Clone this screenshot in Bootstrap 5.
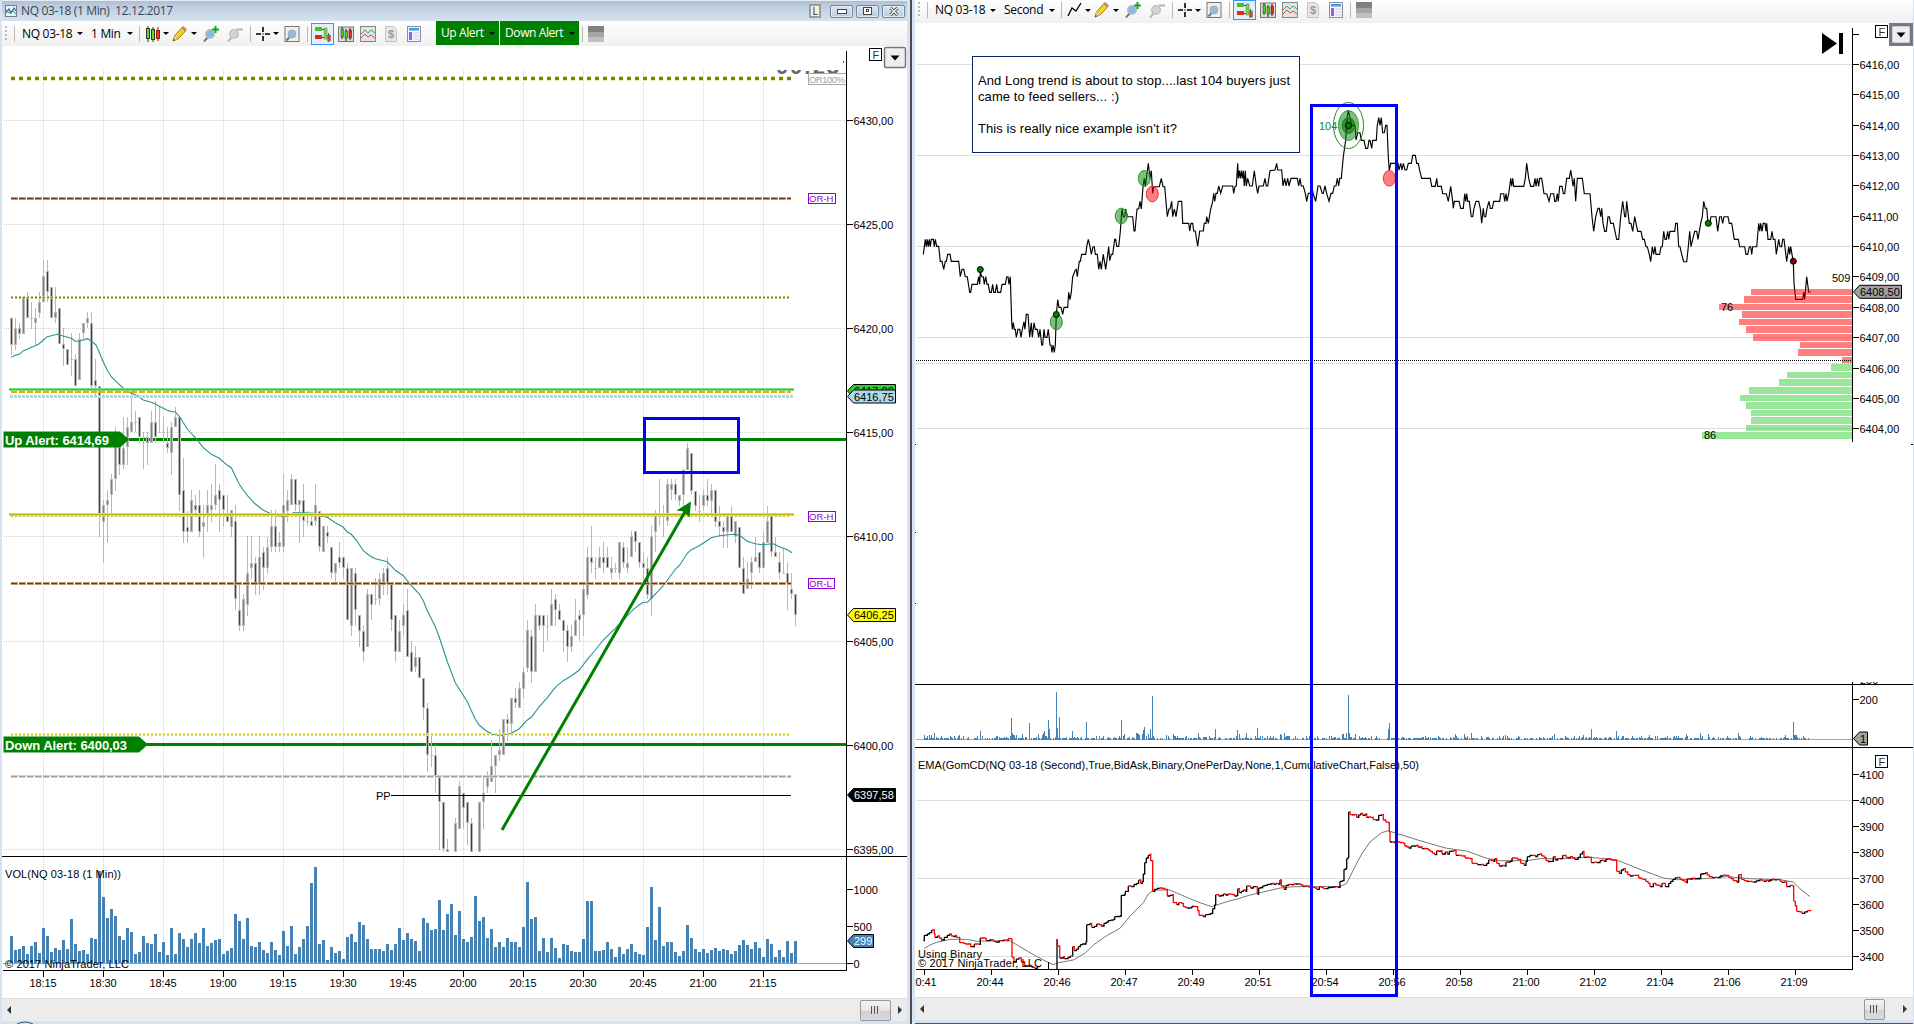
<!DOCTYPE html>
<html lang="en">
<head>
<meta charset="utf-8">
<title>NQ 03-18 charts</title>
<link href="https://cdn.jsdelivr.net/npm/bootstrap@5.3.0/dist/css/bootstrap.min.css" rel="stylesheet">
<script src="https://cdn.jsdelivr.net/npm/bootstrap@5.3.0/dist/js/bootstrap.bundle.min.js"></script>
<style>
body{width:1914px;height:1024px;overflow:hidden;background:#fff;font-family:"Open Sans","Noto Sans",sans-serif;font-size:12px;line-height:1;color:#000}
.desk{width:1914px;height:1024px}
.pane-l{width:910px;border-left:2px solid #d6e4f1;border-right:3px solid #d6e4f1;background:#fff}
.split{width:2px;background:#4b4b50}
.pane-r{width:1002px;border-left:3px solid #d9e4f1;border-right:1px solid #d6e0ee;background:#fff}
.titlebar{height:21px;background:linear-gradient(#aebfd3 0,#bccde0 25%,#d5e3f0 100%);border-top:1px solid #e8edf3;color:#3c4650;padding:0 2px 0 3px}
.titlebar .cap{letter-spacing:-.35px;white-space:pre;margin-left:4px}
.wbtn{width:23px;height:13px;border:1px solid #76869a;border-radius:2px;background:linear-gradient(#dbe6f2,#b9cbdd);box-shadow:inset 0 0 0 1px #e3ecf6;margin-right:3px}
.lbtn{width:12px;height:14px;border:2px solid #a09c94;background:#f4f0e4;font-size:10px;color:#222;margin-right:9px}
.tools{height:25px;background:linear-gradient(#fefefe,#f0f0f0)}
.tools.right{height:23px}
.tools>span{display:flex;align-items:center;justify-content:center;flex:none;height:100%}
.tools.right>span{height:20px}
.tools .txt{justify-content:flex-start;letter-spacing:-.3px;white-space:nowrap}
.s7{width:7px}.s8{width:8px}.s9{width:9px}.s10{width:10px}.s18{width:18px}.s20{width:20px}.s22{width:22px}.s23{width:23px}.s24{width:24px}.s26{width:26px}.s40{width:40px}.s49{width:49px}.s56{width:56px}
.p3x{padding-left:3px}.p7x{padding-left:6px}
.bar1{width:1px;height:16px;background:#b9b9b9}
.grip{width:2px;height:16px;background:repeating-linear-gradient(#bbb 0 2px,transparent 2px 4px)}
.caret{border:3px solid transparent;border-top:3px solid #000;border-bottom:0}
.pick{border:1px solid #3399ff;background:#e4effb;width:23px;height:22px}
.tools.right .pick{height:20px}
.alertbtn{background:#008000;color:#fff;height:24px!important;align-self:flex-start;letter-spacing:-.4px;justify-content:space-between!important;padding:0 4px 0 5px;white-space:nowrap}
.up{width:63px;margin-left:11px}.down{width:79px;margin-left:1px}
.chip{width:16px;height:16px;background:linear-gradient(#808080 0 6px,#a5a5a5 6px 11px,#c0c0c0 11px)}
.scroller{height:23px;background:#ececec;border-top:1px solid #ddd}
.foot-l{height:3px;background:#d6e4f1}
.foot-r{height:4px;background:#d6e0ee;border-bottom:1px solid #555}
.tri-l{border:4px solid transparent;border-right:4px solid #333;border-left:0;margin-left:5px}
.tri-r{border:4px solid transparent;border-left:4px solid #333;border-right:0;margin:0 5px 0 7px}
.thumb{width:31px;height:21px;border:1px solid #979797;border-radius:2px;background:linear-gradient(#f3f3f3,#e6e6e6 50%,#d0d0d4 51%,#dcdcdf)}
.thumb i{width:9px;height:8px;background:repeating-linear-gradient(90deg,#555 0 1px,#ddd 1px 3px)}
.pane-r .thumb{width:21px}
.pane-r .tri-r{margin:0 6px 0 18px}
svg{display:block}
svg text{font-family:"Liberation Sans",Arial,sans-serif;font-size:11px}
</style>
</head>
<body>
<svg width="0" height="0" class="position-absolute">
 <symbol id="candles" viewBox="0 0 16 16"><g stroke="#333" stroke-width="1"><path d="M3 0v16M8 1v15M13 1v14"/><rect x="1.500" y="2.500" width="3" height="10" fill="#55e024"/><rect x="6.500" y="3.500" width="3" height="10" fill="#55e024"/><rect x="11.500" y="4.500" width="3" height="8" fill="#f03820" stroke="#a01808"/></g></symbol>
 <symbol id="zig" viewBox="0 0 16 16"><path d="M1 14l4-8 4 3 5-8" fill="none" stroke="#000" stroke-width="1.300"/></symbol>
 <symbol id="pencil" viewBox="0 0 16 16"><path d="M1 15l1.500-5L10 1.500 13.500 5 6 13z" fill="#f5d22c" stroke="#a07a10"/><path d="M1 15l1.500-5L6 13z" fill="#e6c39a"/><path d="M1 15l.6-2L3 14z" fill="#222"/><path d="M10 1.500l1.500-1 3 3-1 1.500z" fill="#e08f8f" stroke="#a55" stroke-width=".6"/></symbol>
 <symbol id="zin" viewBox="0 0 16 16"><path d="M1 15.500l4-4.500" stroke="#777" stroke-width="2"/><circle cx="7" cy="8" r="4.300" fill="#86b8e0" stroke="#b9bec4" stroke-width="1.500"/><path d="M12.500 0v7M9 3.500h7" stroke="#17a22c" stroke-width="2"/></symbol>
 <symbol id="zout" viewBox="0 0 16 16"><path d="M1 15.500l4-4.500" stroke="#b5b5b5" stroke-width="2"/><circle cx="7" cy="8" r="4.300" fill="#d3d3d3" stroke="#c2c2c2" stroke-width="1.500"/><path d="M9.500 3.500H16" stroke="#b5b5b5" stroke-width="2"/></symbol>
 <symbol id="cross" viewBox="0 0 16 16"><path d="M8 1v5M8 10v5M1 8h5M10 8h5M7.500 8h1" stroke="#000" stroke-width="1.600"/></symbol>
 <symbol id="mag" viewBox="0 0 16 16"><rect x="1" y=".5" width="14" height="15" fill="#f0f0f0" stroke="#777"/><path d="M2.500 14.500l3-3.500" stroke="#777" stroke-width="2"/><circle cx="8" cy="8" r="4" fill="#8fbde2" stroke="#a8adb3"/></symbol>
 <symbol id="trader" viewBox="0 0 16 16"><path d="M0 3.500h11M0 11.500h11M13.500 7v9" stroke="#444"/><rect x="0" y="1" width="7" height="4" fill="#43c51d"/><rect x="0" y="9" width="7" height="4" fill="#dd2c1c"/><rect x="9" y="2" width="3" height="11" fill="#6bdd3b" stroke="#777" stroke-width=".6"/><rect x="12.500" y="9" width="3" height="6" fill="#e03a28" stroke="#777" stroke-width=".6"/></symbol>
 <symbol id="boxc" viewBox="0 0 16 16"><rect x=".5" y="1" width="15" height="14.500" fill="#ddd" stroke="#777"/><path d="M4 1v12M8 3v12M12 2v12" stroke="#222"/><rect x="3" y="3" width="2.500" height="8" fill="#4bd020" stroke="#222" stroke-width=".5"/><rect x="7" y="5" width="2.500" height="7" fill="#4bd020" stroke="#222" stroke-width=".5"/><rect x="11" y="4" width="2.500" height="8" fill="#e02a1a" stroke="#222" stroke-width=".5"/></symbol>
 <symbol id="wave" viewBox="0 0 16 16"><rect x=".5" y=".5" width="15" height="15" fill="#e3e3e3" stroke="#888"/><path d="M1 8l4-4 3 3 3-3 4 3" fill="none" stroke="#35a36b"/><path d="M1 12l4-4 3 3 3-2 4 3" fill="none" stroke="#d84a4a"/></symbol>
 <symbol id="money" viewBox="0 0 16 16"><path d="M2.500.5h8l3 3v12h-11z" fill="#e6e6e6" stroke="#c4c4c4"/><text x="5" y="12" fill="#999" font-weight="bold">$</text></symbol>
 <symbol id="panel" viewBox="0 0 16 16"><rect x="1.500" y=".5" width="13" height="15" fill="#f4f4fc" stroke="#8b8fa0"/><rect x="3" y="2" width="10" height="2.500" fill="#3b9fe0"/><rect x="3" y="6" width="3" height="8" fill="#9a5cf0"/><path d="M7.500 7h6M7.500 10h6M7.500 13h6" stroke="#cdd2e2"/></symbol>
</svg>
<div class="desk d-flex">
 <section class="pane-l d-flex flex-column flex-shrink-0">
  <header class="titlebar d-flex align-items-center">
   <svg width="12" height="12" viewBox="0 0 12 12"><rect x=".5" y=".5" width="11" height="11" fill="#e9f2f7" stroke="#6e7e8c"/><path d="M1 8l3-4 2 4 3-5 2 3" fill="none" stroke="#2e62b0" stroke-width="1.200"/><path d="M1 5l3 3 4-2 3 3" fill="none" stroke="#32964b"/></svg>
   <span class="cap flex-grow-1">NQ 03-18 (1 Min)  12.12.2017</span>
   <span class="lbtn d-flex align-items-center justify-content-center">L</span>
   <span class="wbtn d-flex align-items-center justify-content-center"><svg width="10" height="5"><rect x=".5" y=".5" width="9" height="4" fill="#fff" stroke="#444"/></svg></span>
   <span class="wbtn d-flex align-items-center justify-content-center"><svg width="9" height="8"><rect x=".5" y=".5" width="8" height="7" fill="#fff" stroke="#444"/><rect x="3.500" y="2.500" width="2" height="2" fill="none" stroke="#444"/></svg></span>
   <span class="wbtn me-0 d-flex align-items-center justify-content-center"><svg width="10" height="9"><path d="M1.500 1l7 7M8.500 1l-7 7" stroke="#444" stroke-width="3"/><path d="M1.500 1l7 7M8.500 1l-7 7" stroke="#fff" stroke-width="1.200"/></svg></span>
  </header>
  <nav class="tools d-flex" id="toolsL"></nav>
  <svg id="left" width="905" height="952" viewBox="2 46 905 952"></svg>
  <div class="scroller d-flex align-items-center"><span class="tri-l me-auto"></span><span class="thumb d-flex align-items-center justify-content-center"><i></i></span><span class="tri-r"></span></div>
  <div class="foot-l"><svg width="40" height="3"><path d="M15 3q8-4 16 0" fill="none" stroke="#1c5a86"/></svg></div>
 </section>
 <div class="split flex-shrink-0"></div>
 <section class="pane-r d-flex flex-column flex-shrink-0">
  <nav class="tools right d-flex" id="toolsR"></nav>
  <svg id="right" width="998" height="974" viewBox="915 23 998 974"></svg>
  <div class="scroller d-flex align-items-center"><span class="tri-l me-auto"></span><span class="thumb d-flex align-items-center justify-content-center"><i></i></span><span class="tri-r"></span></div>
  <div class="foot-r"></div>
 </section>
</div>
<script>
(()=>{
// Toolbars
const slot=(w,h)=>`<span class="s${w}">${h}</span>`, car='<i class="caret"></i>', sep='<i class="bar1"></i>';
const ic=(n,s=16)=>`<svg width="${s}" height="${s}"><use href="#${n}" width="${s}" height="${s}"/></svg>`;
const tools=(period,w,kind,alerts)=>slot(8,'<i class="grip"></i>')+slot(9,sep)+`<span class="txt p3x s56">NQ 03-18</span>`+slot(10,car)+
 `<span class="txt p7x s${w}">${period}</span>`+slot(10,car)+slot(9,sep)+slot(18,ic(kind))+slot(8,car)+slot(20,ic('pencil'))+slot(8,car)+slot(26,ic('zin'))+slot(22,ic('zout'))+
 slot(8,sep)+slot(18,ic('cross'))+slot(8,car)+slot(24,ic('mag'))+slot(7,sep)+`<span class="s23"><b class="pick d-flex align-items-center justify-content-center">${ic('trader')}</b></span>`+
 slot(23,ic('boxc'))+slot(22,ic('wave'))+slot(24,ic('money'))+slot(22,ic('panel'))+alerts+slot(7,sep)+slot(20,'<i class="chip"></i>');
document.getElementById('toolsL').innerHTML=tools('1 Min',40,'candles',`<span class="alertbtn up">Up Alert${car}</span><span class="alertbtn down">Down Alert${car}</span>`);
document.getElementById('toolsR').innerHTML=tools('Second',49,'zig','');

const R=(x,y,w,h,f,e='')=>`<rect x="${x}" y="${y}" width="${w}" height="${h}" fill="${f}" ${e}/>`;
const L=(x1,y1,x2,y2,c,w=1,e='')=>`<path d="M${x1} ${y1}L${x2} ${y2}" stroke="${c}" stroke-width="${w}" fill="none" ${e}/>`;
const T=(x,y,s,e='')=>`<text x="${x}" y="${y}" ${e}>${s}</text>`;
const crisp='shape-rendering="crispEdges"';
const tag=(y,s,f,c,w=48,x=847.500,b='#000')=>`<path d="M${x} ${y}l6-6.500h${w-6}v13h-${w-6}z" fill="${f}" stroke="${b}"/>`+T(x+6.500,y+4,s,`fill="${c}"`);
const F=(x,y)=>R(x,y,12,12,'#fff','stroke="#000"')+T(x+3,y+10,'F','fill="#333"');
const drop=(x,y,w,h)=>R(x,y,w,h,'#eee','stroke="#777" stroke-width="1.500" rx="1.500"')+`<path d="M${x+w/2-4.500} ${y+h/2-2}h9l-4.500 5z"/>`;
const pts=(a,x0,y0)=>a.trim().split(/\s+/).map(p=>{const[x,y]=p.split(',');return[x0+x/3,y0+y/3]});
const line=p=>'M'+p.map(q=>q[0].toFixed(1)+' '+q[1].toFixed(1)).join('L');

// One-minute candles: high, top, bottom, low and direction, in thirds of a pixel below y0
const segs=[[0,240,`232,235,314,345r 235,265,314,330g 250,265,281,298r 170,172,281,281g 157,172,235,235r 187,235,235,266d 203,235,250,314g 157,187,218,235g 60,108,187,187g 60,94,157,187r 140,140,235,235r 140,216,235,250g 203,203,313,313r 265,313,328,377r 328,328,376,376r 280,358,358,407d 342,358,437,437r 280,297,421,421g 250,250,280,300g 216,235,250,265g 216,250,437,455r 358,421,437,470r 437,437,829,890r 780,796,845,968g 750,780,796,908g 703,718,766,829g 562,610,718,752g 610,620,674,704r 532,625,674,688g 532,562,620,675g 455,547,577,577g 513,547,547,577d 532,532,592,610r 577,592,592,688d 577,592,610,675r 514,547,610,610g 483,547,592,610r 500,577,577,577d 532,577,577,610d 560,610,625,640r 547,562,640,704g 500,532,562,562g 530,532,766,812r 655,750,875,908r 812,860,875,908r 750,780,875,875g 766,796,811,829r 750,796,875,890r 796,845,860,953g 750,796,829,875g 732,796,811,845g 672,766,796,811g 732,750,780,875r 766,766,811,860r 766,829,845,845r 811,811,860,890g`],
[56,450,`165,213,448,480r 402,480,527,543r 432,448,527,543g 258,370,464,497g 258,338,354,386g 322,338,402,434r 258,322,402,434g 290,307,354,420r 260,292,354,372g 180,229,292,307g 180,229,292,307r 245,276,292,307g 72,166,292,307g 120,150,182,215g 72,88,166,166g 88,88,166,182r 150,150,166,278g 102,150,213,260r 182,213,213,229d 200,213,229,229r 102,166,213,229g 182,182,292,307r 229,229,307,307g 229,245,260,278r 292,292,370,386r 338,338,370,402g 276,322,338,354r 322,322,354,386r 338,354,511,511r 354,354,527,558g 354,370,480,527r 495,495,543,590r 525,543,605,635r 417,432,590,590g 432,432,464,511r 383,448,448,464d 370,386,448,464g 354,370,402,434g 320,354,402,434r 402,402,511,543r 495,495,605,635r 511,543,605,605g 463,495,527,558g 417,480,620,620r 574,605,667,667r 589,620,652,667g 620,620,683,683r 683,683,775,810r 760,775,916,965r 853,916,916,950d 885,916,979,1028r 979,979,1057,1200r 1057,1057,1198,1205r 1167,1198,1205,1205r - 1105,1120,1205,1205g 994,1008,1136,1136g 1028,1028,1073,1136r 1057,1057,1120,1185r 1105,1120,1205,1205r - 1057,1057,1205,1205g 979,1028,1057,1136g 963,979,1010,1028g 870,948,995,995g 916,916,948,1028g 838,901,916,932g 807,807,916,916g 792,807,823,872r 744,744,823,855g 714,744,760,775r 697,714,775,775g 652,667,716,745g 511,541,655,667g 541,557,667,698r 463,496,667,667g 496,496,527,540r 496,496,527,605r 495,527,527,574d 417,463,527,527g 432,448,480,527r 463,480,511,511r 511,511,543,605r 525,541,590,635r 525,557,590,605g 448,511,557,557g 480,496,511,574r 402,417,496,558g 290,322,434,448g 229,322,338,370r 322,354,354,386d 290,322,354,354g 276,322,338,370r 290,322,354,354r 322,354,370,386g 338,354,354,370d 276,276,370,386g 276,292,338,354r 292,338,354,370g 243,258,322,322g 243,243,276,307r 276,276,338,354r 307,338,354,402r 320,354,434,448r 229,258,448,497g 180,198,245,307g 88,198,198,229d 166,198,198,260d 88,102,213,229g 88,102,120,150g 88,102,135,150r`],
[167,380,`345,346,362,378g 267,270,346,400g 188,204,270,270g 220,220,332,346r 332,332,377,392r 345,392,392,426d 330,346,377,392g 297,346,362,377r 312,331,362,408g 331,331,426,440r 377,424,440,470r 424,440,455,503r 408,408,455,503g 377,408,455,455r 424,424,470,488g 440,440,565,565r 532,565,643,643r 547,597,628,628g 532,547,580,628g 470,532,547,547g 517,517,565,580r 455,486,565,565g 377,424,488,488g 408,408,517,532r 470,517,532,532r 517,547,580,597r 503,580,580,580d 547,580,610,690r 580,628,643,658r 643,643,706,738r`]];
let g=`<g ${crisp}>`;
for(let k=0;k<13;k++)g+=L(43.500+60*k,70,43.500+60*k,966,'#d3d3d3',1,'stroke-dasharray="1 1"');
[120.500,224.500,328.500,432.500,536.500,641.500,745.500,849.500].forEach(y=>g+=L(4,y,846,y,'#d3d3d3',1,'stroke-dasharray="1 1"'));
const dash=(y,c,w,d,x1=11,x2=791)=>L(x1,y,x2,y,c,w,`stroke-dasharray="${d}"`);
g+=L(128,439.500,846,439.500,'#008000',3)+L(140,744.500,846,744.500,'#008000',3);
g+='</g>';
let c=`<g ${crisp}>`;
segs.forEach(([i0,y0,d])=>d.split(' ').forEach((r,j)=>{ if(r==='-')return;
 const k=r.slice(-1),v=r.slice(0,-1).split(',').map(n=>Math.round(y0+n/3)),x=10+4*(i0+j);
 c+=R(x+1,v[0],1,Math.max(1,v[3]-v[0]),'#b8b8b8');
 if(k==='d')c+=R(x,v[1],3,1,'#c0c0c0');
 else c+=R(x,v[1],3,v[2]-v[1],'#b8b8b8')+R(x+1,v[1]+1,1,Math.max(1,v[2]-v[1]-2),k==='g'?'#22c322':'#9c1414');
}));
c+='</g>';
const ema=[...pts('34,352 46,346 58,343 70,332 82,328 94,322 106,317 118,311 130,300 142,290 154,287 172,283 190,288 214,295 226,304 238,304 262,296 274,302 288,315 298,337 310,366 322,391 334,410 352,428 376,450 394,459 412,467 430,480 454,487 466,492 484,502 502,511 514,515 526,515 540,532 562,567 586,593 610,623 634,643 658,655 682,676 694,683 706,708 718,733 730,750 742,766 766,792 790,811 810,820 838,829 858,829 880,818 910,818 945,820 962,828 982,832 1006,848 1030,862 1042,876 1054,883 1070,902 1090,932 1110,948 1126,956',0,240),
...pts('562,335 586,361 610,377 634,407 658,432 670,452 682,482 706,530 718,562 742,635 766,698 802,755 826,808 838,826 862,845 880,853 900,857 918,853 934,850 958,836 982,810 994,802 1018,770 1042,743 1066,712 1090,692 1114,678 1138,660 1162,628 1186,600 1210,570 1246,535 1270,510 1294,484 1318,464 1330,457 1342,457',200,450),
...pts('634,655 670,617 706,568 720,554 742,520 754,509 778,497 800,482 814,473 838,467 880,463 898,466 922,484 946,491 966,494 1000,491 1018,500 1042,509 1056,518',440,380)];
c+=`<path d="${line(ema)}" fill="none" stroke="#2a9292" stroke-width="1.100"/>`;
let o=`<g ${crisp}>`;
o+=dash(78.500,'#e3e3b0',5,'4 4',11,792)+dash(78.500,'#808000',3,'4 4',11,792);
[198.500,583.500].forEach(y=>o+=dash(y,'#c09a78',3,'7 1')+dash(y,'#7a3606',1,'6 2'));
o+=dash(297.500,'#bcbc78',3,'2 2')+dash(297.500,'#808000',1,'2 2');
o+=dash(391.500,'#ffa500',2,'6 2')+L(9,389.500,794,389.500,'#7be07b',3)+L(9,389.500,794,389.500,'#32cd32',1)+dash(396.500,'#add8e6',3,'3 1',10,793);
o+=L(9,514.500,794,514.500,'#dcd870',3)+L(9,514.500,794,514.500,'#c0b800',1)+dash(516.500,'#c8c030',1,'2 2');
o+=dash(734.500,'#e6e690',3,'2 2')+dash(734.500,'#c8c800',1,'2 2');
o+=dash(776.500,'#d0d0d0',3,'7 1')+dash(776.500,'#a0a0a0',1,'6 2')+L(391,795.500,791,795.500,'#000');
o+='</g>';
// Labels on levels
o+='<g><path d="M3.500 431.500H120l9 8-9 8H3.500z" fill="#008000"/>'+T(5,445,'Up Alert: 6414,69','fill="#fff" font-weight="bold" style="font-size:13px" textLength="104"');
o+='<path d="M3.500 736.500H139l9 8-9 8H3.500z" fill="#008000"/>'+T(5,750,'Down Alert: 6400,03','fill="#fff" font-weight="bold" style="font-size:13px" textLength="122"')+'</g>';
o+=T(376,799.500,'PP');
[[193.500,'OR-H',28],[511.500,'OR-H',28],[578.500,'OR-L',27]].forEach(([y,t,w])=>o+=R(808.500,y,w-1,10,'none','stroke="#9400d3"')+T(809,y+8.500,t,'fill="#9400d3" style="font-size:9.500px"'));
o+=`<svg x="760" y="70" width="86" height="20" viewBox="760 70 86 20">${T(776,74,'00:23','fill="#666" font-weight="bold" style="font-size:22px" textLength="63"')}</svg>`+R(808.500,73.500,38,11,'none','stroke="#a8a8a8"')+T(809,82.500,'OR100%','fill="#a0a0a0" style="font-size:9.500px" textLength="36"');
// Volume bars
const vol='768,810,807,798,822,798,786,819,744,768,816,804,810,780,807,717,792,813,810,822,774,777,573,651,714,687,708,768,780,744,756,822,816,768,789,792,762,816,786,825,744,822,759,777,801,777,759,789,744,798,789,780,777,822,813,804,702,723,777,714,798,801,786,810,819,786,810,825,753,798,738,822,801,777,738,609,561,792,780,840,801,819,813,837,771,762,786,726,735,777,807,807,807,813,792,810,792,744,780,759,777,783,813,714,729,750,747,660,750,702,672,765,693,777,786,771,648,723,711,774,747,801,786,801,774,786,786,801,741,606,717,711,813,774,816,774,804,834,792,795,813,816,816,777,663,663,813,813,810,786,807,831,801,822,807,792,816,822,825,741,621,780,681,798,786,786,816,828,813,735,774,807,816,807,819,810,804,813,807,810,822,813,795,780,795,807,786,804,831,777,792,831,810,831,783,819,783'.split(',');
let v=`<g ${crisp}>`+L(3,963.500,846,963.500,'#a0a0a0');
vol.forEach((t,i)=>v+=R(10+4*i,680+t/3,3,283-t/3,'#4682b4'));
v+=L(2,856.500,907,856.500,'#000')+L(846.500,51,846.500,971,'#000')+L(3,970.500,847,970.500,'#000');
const tl=['18:15','18:30','18:45','19:00','19:15','19:30','19:45','20:00','20:15','20:30','20:45','21:00','21:15'];
tl.forEach((t,k)=>v+=L(43.500+60*k,970,43.500+60*k,977,'#000'));
const ax=[[120.500,'6430,00'],[224.500,'6425,00'],[328.500,'6420,00'],[432.500,'6415,00'],[536.500,'6410,00'],[641.500,'6405,00'],[745.500,'6400,00'],[849.500,'6395,00'],[889.500,'1000'],[926.500,'500'],[963.500,'0']];
ax.forEach(a=>v+=L(846,a[0],853,a[0],'#000'));
v+='</g>';
tl.forEach((t,k)=>v+=T(29.500+60*k,987,t,'textLength="27"'));
ax.forEach(a=>v+=T(853.500,a[0]+4.500,a[1]));
v+=T(5,878,'VOL(NQ 03-18 (1 Min))','textLength="116"')+T(5,968,'© 2017 NinjaTrader, LLC','textLength="124"');
v+=tag(391,'6417,00','#32cd32','#000')+tag(396.500,'6416,75','#add8e6','#000')+tag(615,'6406,25','#ffff00','#000')+tag(795,'6397,58','#000','#fff')+tag(941,'299','#4682b4','#fff',26);
v+=L(502,830,686,510,'#008000',3)+'<path d="M691 501.500L676.500 510.500l7.500 1 5.500 6z" fill="#008000"/>';
v+=R(644.500,418.500,94,54,'none',`stroke="#0000ff" stroke-width="3" ${crisp}`)+F(869.500,48.500)+drop(884.500,47.500,21,20)+R(843,61,1,2,'#a03050');
document.getElementById('left').innerHTML=g+c+o+v;

// Seconds chart
let q=`<g ${crisp}>`;
[64.500,155.500,246.500,337.500,428.500,800.500,878.500,956.500].forEach(y=>q+=L(917,y,1852,y,'#dedede'));
q+='</g>';
const px=[...pts('40,643 46,598 49,620 52,598 55,620 58,598 61,620 64,598 70,598 73,620 76,598 80,619 86,619 91,664 96,664 101,688 106,664 109,664 113,643 120,643 124,664 146,664 151,710 156,688 161,688 166,710 172,710 179,757 182,757 186,733 202,733 206,710 209,733 211,695 215,710 220,710 223,733 227,710 231,733 235,733 239,757 244,757 248,733 251,757 256,757 260,733 263,757 272,757 276,733 286,733 290,710 294,710 297,733 301,710 305,845 307,868 310,848 313,868 316,868 319,892 324,868 329,868 333,892 337,868 342,845 345,868 349,823 354,823 359,892 364,848 367,892 372,848 376,868 382,868 386,892 390,868 395,915 398,915 402,868 405,892 411,892 415,868 420,915 423,915 426,937 429,915 433,937 436,915 439,825 443,779 447,802 453,802 458,823 462,802 473,802 476,757 480,779 484,757 488,710 496,690 499,688 502,710 508,664 511,664 515,643 527,643 530,620 535,598 540,620 544,643 549,620 553,620 556,643 562,643 566,688 570,664 574,688 580,643 587,688 593,643 596,620 599,662 604,643 608,643 614,598 617,598 620,619 626,619 631,575 634,530 636,507 640,530 644,530 647,507 652,530 668,530 672,573 675,573 681,507 686,507 690,484 694,507 699,440 703,415 706,440 715,370 720,415 724,392 728,460 731,440 748,440 754,415 759,440 764,440 772,530 777,507 780,507 785,484 788,530 793,507 798,530 805,484 815,484 818,550 836,550 839,573 843,550 848,550 851,573 856,573 863,619 869,573 880,573 883,550 888,550 890,530 895,550 902,507 908,484 911,460 914,484 918,460 922,460 926,438 932,460 938,438 968,438 971,460 975,440 979,438 983,370 985,415 988,392 991,415 994,392 997,415 1000,392 1003,438 1006,392 1009,438 1013,415 1019,438 1027,438 1033,392 1039,438 1043,460 1047,438 1060,438 1065,415 1069,438 1073,438 1080,392 1095,390 1100,370 1103,390 1115,390 1119,438 1124,415 1128,438 1133,415 1137,438 1143,415 1162,415 1166,438 1170,415 1174,438 1180,438 1186,460 1190,484 1195,460 1201,460 1206,440 1209,460 1217,484 1224,438 1230,438 1237,460 1240,460 1245,438 1250,460 1257,484 1263,460 1268,460 1273,438 1278,438 1282,415 1286,438 1289,415 1294,415 1300,350 1307,300 1312,230 1315,210 1325,256 1335,256 1338,300 1343,278 1350,278 1354,301 1362,301 1367,325 1373,325 1377,301 1380,301 1385,325 1388,301 1399,301 1402,256 1406,233 1410,256 1414,233 1418,278 1423,278 1427,256 1431,256 1435,350 1438,392 1442,370 1464,370 1467,390 1472,370 1476,390 1480,370 1485,390 1490,390 1495,370',910,40),
...pts('30,190 34,190 38,166 46,166 50,190 55,190 59,212 65,235 91,235 95,259 106,259 110,235 113,259 124,259 128,281 139,281 145,304 152,259 158,304 160,325 163,304 177,304 182,325 190,325 194,281 197,304 200,281 203,304 208,304 214,350 218,350 222,325 228,304 236,304 241,325 245,370 250,325 253,350 257,350 261,325 267,304 271,325 277,325 281,304 299,304 302,281 311,281 314,304 318,281 321,304 326,281 329,259 332,235 335,259 338,235 341,259 371,259 376,235 380,190 386,235 392,259 401,259 405,235 408,259 412,235 416,259 419,235 425,235 432,281 440,281 447,304 452,281 461,281 464,304 468,304 472,281 475,304 479,259 486,259 490,281 494,281 500,235 508,235 512,210 516,235 519,259 523,235 527,304 532,235 547,235 553,281 570,281 576,350 581,394 587,350 594,325 598,325 602,350 605,325 609,370 614,394 619,394 624,350 628,350 632,370 640,370 645,394 650,418 656,418 662,350 668,304 674,350 677,350 680,304 688,370 693,370 698,394 704,350 708,370 713,394 723,394 728,418 733,418 738,440 742,440 748,463 752,485 757,440 761,463 765,440 768,463 779,463 783,440 787,440 791,394 795,418 799,418 803,394 806,418 810,394 824,394 827,370 832,370 836,440 840,440 845,463 851,485 860,485 865,440 869,394 873,440 878,418 884,394 890,394 894,418 898,394 902,370 907,350 911,304 916,325 920,325 924,370 929,370 933,350 948,350 953,394 959,350 964,350 968,370 972,350 984,350 988,370 995,370 1003,418 1015,418 1019,440 1034,440 1038,463 1043,463 1048,440 1052,440 1055,463 1058,440 1070,440 1076,370 1079,394 1082,370 1086,394 1090,370 1095,370 1098,394 1100,370 1104,418 1112,418 1116,394 1120,418 1125,418 1129,463 1136,418 1140,440 1145,440 1148,418 1152,418 1160,485 1166,440 1169,463 1172,440 1176,463 1180,485 1182,550 1187,598 1208,598 1211,576 1214,598 1220,530 1226,576 1232,576',1400,100)];
q+=`<path d="${line(px)}" fill="none" stroke="#000" stroke-width="1.150"/>`;
const el=(x,y,rx,ry,f,st,o=1)=>`<ellipse cx="${x}" cy="${y}" rx="${rx}" ry="${ry}" fill="${f}" stroke="${st}" fill-opacity="${o}"/>`;
[[1144.300,178.300],[1121.300,216],[1056.300,322]].forEach(p=>q+=el(...p,6,7.800,'#008000','#2c9a2c',.5));
[[1152.300,194],[1389.300,178.300]].forEach(p=>q+=el(...p,6,7.800,'#ff0000','#ff3030',.5));
q+=T(1319,130,'104','fill="#228b22"')+el(1348.500,125.500,15,23,'none','#228b22')+el(1348.500,125.500,10,15,'#008000','#2c9a2c',.5)+el(1348.500,125.500,6.500,8,'#006800','#1c8a1c',.6);
[[980.300,269.500],[1056.300,314.500],[1348.500,125.500],[1708.300,223.300]].forEach(p=>q+=el(...p,3,3,'#008000','#000'));
q+=el(1793.300,261.300,3,3,'#900000','#000');
q+=`<g ${crisp}>`;
const tops=[567,588,612,633,657,678,702,726,747,771,792,816,837,861,885,906,930,951,975,996,1020],lf=[1053,1032,957,1026,1017,1038,1059,1200,1194,1326,1293,1161,1137,1047,1020,1038,1053,1053,1038,906];
lf.forEach((l,i)=>{const x=Math.round(1400+l/3),y=Math.round(100+tops[i]/3);q+=R(x,y,1852-x,Math.round(100+tops[i+1]/3)-y-1,i<10?'#ff0000':'#32cd32','fill-opacity=".5"')});
q+=L(916,360.500,1852,360.500,'#000',1,'stroke-dasharray="1 1"')+L(916,363.500,1852,363.500,'#bbb',1,'stroke-dasharray="1 1"');
// tick volume: listed peaks over a low floor of trades
const peaks={43:195,58:196,65:195,73:189,148:195,211:183,304:144,307:190,310:194,313:196,319:195,337:192,358:159,385:192,397:195,400:189,403:183,415:150,418:178,439:66,442:174,448:141,487:183,530:156,634:150,643:192,679:189,682:189,685:192,688:195,697:192,700:180,703:171,715:192,721:177,727:78,769:195,790:192,865:189,916:177,982:180,988:192,1009:189,1042:174,1111:192,1114:194,1123:189,1297:192,1300:192,1309:189,1315:75,1318:189,1336:192,1435:177,1438:159,1636:192,1664:192,1684:189,1786:195,1933:192,2020:195,2044:177,2119:183,2218:195,2329:192,2371:189,2395:192,2485:189,2626:195,2650:156,2653:195,2656:196,2659:196};
let seed=11;const rnd=()=>(seed=(seed*16807)%2147483647)/2147483647;
q+=L(916,739.500,1852,739.500,'#a8a8a8');
for(let x=43;x<2696;x+=3){const r=rnd();if(r<.62){const h=r<.1?4:r<.2?3:2;q+=R(Math.round(910+x/3),740-h,1,h,'#4682b4')}}
for(const x in peaks){const y=670+peaks[x]/3;q+=R(Math.round(910+x/3-.3),y,1,740-y,'#4682b4')}
q+=L(915,684.500,1913,684.500,'#000')+L(915,747.500,1913,747.500,'#000')+L(1852.500,28,1852.500,442,'#000')+L(1852.500,682,1852.500,970,'#000')+L(916,969.500,1853,969.500,'#000');
q+=R(915,444,1,1,'#000')+R(915,532,1,1,'#000')+R(915,603,1,1,'#000')+R(1911,444,2,1,'#000');
const tr=['20:41','20:44','20:46','20:47','20:49','20:51','20:54','20:56','20:58','21:00','21:02','21:04','21:06','21:09'];
tr.forEach((t,k)=>q+=L(924.500+67*k,969,924.500+67*k,975,'#000'));
q+=L(1853,34.500,1859,34.500,'#000')+'</g>';
tr.forEach((t,k)=>q+=T(909.500+67*k,986,t,'textLength="27"'));
const ar=[];for(let k=0;k<13;k++)ar.push([Math.floor(64.500+30.350*k)+.5,(6416-k)+',00']);
for(let k=0;k<8;k++)ar.push([774.500+26*k,String(4100-100*k)]);ar.push([699.500,'200']);
ar.forEach(a=>q+=L(1853,a[0],1859,a[0],'#000')+T(1859.500,a[0]+4.500,a[1]));
q+='<svg x="1855" y="682" width="50" height="2.500" viewBox="1855 682 50 2.500">'+T(1860,683.700,'250')+'</svg>';
q+=tag(291.800,'6408,50','#a0a0a0','#000',48,1853.500)+tag(738.500,'1','#a0a0a0','#000',14,1853.500);
q+=T(1832,282,'509')+T(1721,311,'76')+T(1704,439,'86');
// Cumulative delta: rising runs black, falling runs red
const cd=[...pts('40,812 43,796 52,792 58,788 65,780 73,792 75,802 82,798 88,804 94,810 103,802 112,796 118,792 124,798 136,796 139,802 148,804 149,818 160,820 172,822 182,830 193,822 208,823 211,804 226,806 229,812 238,810 250,814 262,816 274,812 292,812 294,806 304,808 306,862 312,876 326,864 334,876 344,888 354,886 365,892 375,896 388,888',910,670)],
cd2=[...pts('439,896 441,808 442,828 448,830 449,864 460,860 463,866 474,862 487,858 488,830 493,842 505,830 517,822 528,814 530,764 540,760 545,772 560,762 574,768 582,760 594,752 610,748 614,740 630,738 634,676 644,672 646,664 655,648 664,650 680,640 686,630 692,640 697,634 700,612 704,578 709,564 715,556 721,552 722,572 727,572 728,664 734,658 748,654 764,658 772,678 786,674 790,698 800,704 806,698 814,700 820,710 832,714 858,710 863,722 867,736 880,740 886,734 902,730 908,716 914,704 917,674 926,678 940,672 980,676 983,656 988,668 1000,660 1006,664 1010,648 1022,654 1038,650 1042,672 1046,654 1064,646 1080,642 1104,642 1110,630 1114,648 1122,658 1128,646 1150,642 1166,642 1184,648 1202,652 1220,658 1228,650 1246,656 1262,652 1284,652 1290,634 1297,632 1302,598 1308,594 1310,566 1314,562 1316,426 1320,434 1332,434 1340,442 1352,430 1358,436 1365,432 1370,442 1382,442 1397,450 1406,436 1414,434 1420,450 1434,458 1438,486 1440,516 1452,518 1456,512',910,670),
...pts('-10,516 0,518 10,520 14,528 26,534 40,528 62,530 66,536 78,536 90,544 104,554 110,542 122,542 126,552 136,546 142,552 148,544 160,542 168,556 190,558 195,564 210,566 216,580 232,584 250,586 260,580 266,570 280,574 284,566 290,580 298,588 314,588 318,576 330,574 336,564 352,568 362,580 372,586 378,574 382,560 398,556 406,560 418,552 432,562 438,572 450,574 460,560 466,570 480,566 488,556 498,562 510,560 524,568 534,562 548,544 552,562 566,562 574,578 590,578 600,572 612,574 624,566 640,570 648,572 650,604 658,610 664,600 670,596 676,606 690,618 706,616 716,624 730,628 744,640 750,650 760,640 774,646 780,650 786,640 796,650 806,640 812,634 832,622 840,628 858,638 862,626 884,626 900,624 902,612 916,608 928,620 944,622 960,618 976,616 986,622 1000,632 1010,636 1016,614 1024,628 1040,634 1062,636 1080,628 1092,634 1110,630 1130,628 1140,634 1152,636 1160,650 1170,646 1178,648 1181,694 1186,708 1190,724 1206,730 1222,722 1232,724',1400,670)];
// long runs are broken into two-pixel steps with a small jitter
const jag=a=>{const r=[a[0]];for(let i=1;i<a.length;i++){const[x0,y0]=a[i-1],[x1,y1]=a[i],n=Math.max(1,Math.floor((x1-x0)/2));for(let k=1;k<=n;k++)r.push([x0+(x1-x0)*k/n,y0+(y1-y0)*k/n+(k<n?(rnd()-.5)*1.800:0)])}return r};
let bk='',rd='';[jag(cd),jag(cd2)].forEach(a=>{for(let i=1;i<a.length;i++){const[x0,y0]=a[i-1],[x1,y1]=a[i],d=`M${x0.toFixed(1)} ${y0.toFixed(1)}H${x1.toFixed(1)}V${y1.toFixed(1)}`;if(y1>y0)rd+=d;else bk+=d}});
const em=[...pts('43,835 60,825 80,817 120,808 170,808 200,814 260,812 300,812 330,830 360,848 400,870 430,884 445,878 490,870 525,850 550,825 590,797 630,775 660,738 700,698 715,672 730,660 780,660 830,682 870,698 905,710 950,695 985,686 1020,675 1060,666 1110,654 1150,650 1290,650 1310,640 1335,590 1355,552 1380,516 1415,488 1435,482 1470,494',910,670),...pts('0,493 60,512 140,535 200,543 260,565 300,572 380,572 420,566 480,566 570,562 650,570 720,598 790,624 830,629 900,627 980,620 1050,626 1140,629 1180,636 1200,656 1230,680',1400,670)];
q+=`<path d="${line(em)}" fill="none" stroke="#777"/><path d="${bk}" fill="none" stroke="#000" stroke-width="1.300"/><path d="${rd}" fill="none" stroke="#f00" stroke-width="1.300"/>`+L(1048.500,962,1048.500,969,'#000');
q+=T(918,769,'EMA(GomCD(NQ 03-18 (Second),True,BidAsk,Binary,OnePerDay,None,1,CumulativeChart,False),50)','textLength="501"')+T(918,958,'Using Binary','textLength="64"')+T(918,967,'© 2017 NinjaTrader, LLC','textLength="124"');
q+=R(972.500,56.500,327,96,'#fff','stroke="#0a246a"');
[['And Long trend is about to stop....last 104 buyers just',85,312],['came to feed sellers... :)',101,141],["This is really nice example isn't it?",133,199]].forEach(a=>q+=T(978,a[1],a[0],`style="font-size:13px" textLength="${a[2]}"`));
q+=R(1311.500,105.500,85,890,'none',`stroke="#0000ff" stroke-width="3" ${crisp}`);
q+='<path d="M1822 33l15 10.500-15 10.500zM1839 33h4v21h-4z"/>'+F(1875.500,25.500)+R(1889,23,24,23,'#6f7d8c')+drop(1891.500,25.500,19,18)+F(1875.500,755.500);
document.getElementById('right').innerHTML=q;
})();
</script>
</body>
</html>
